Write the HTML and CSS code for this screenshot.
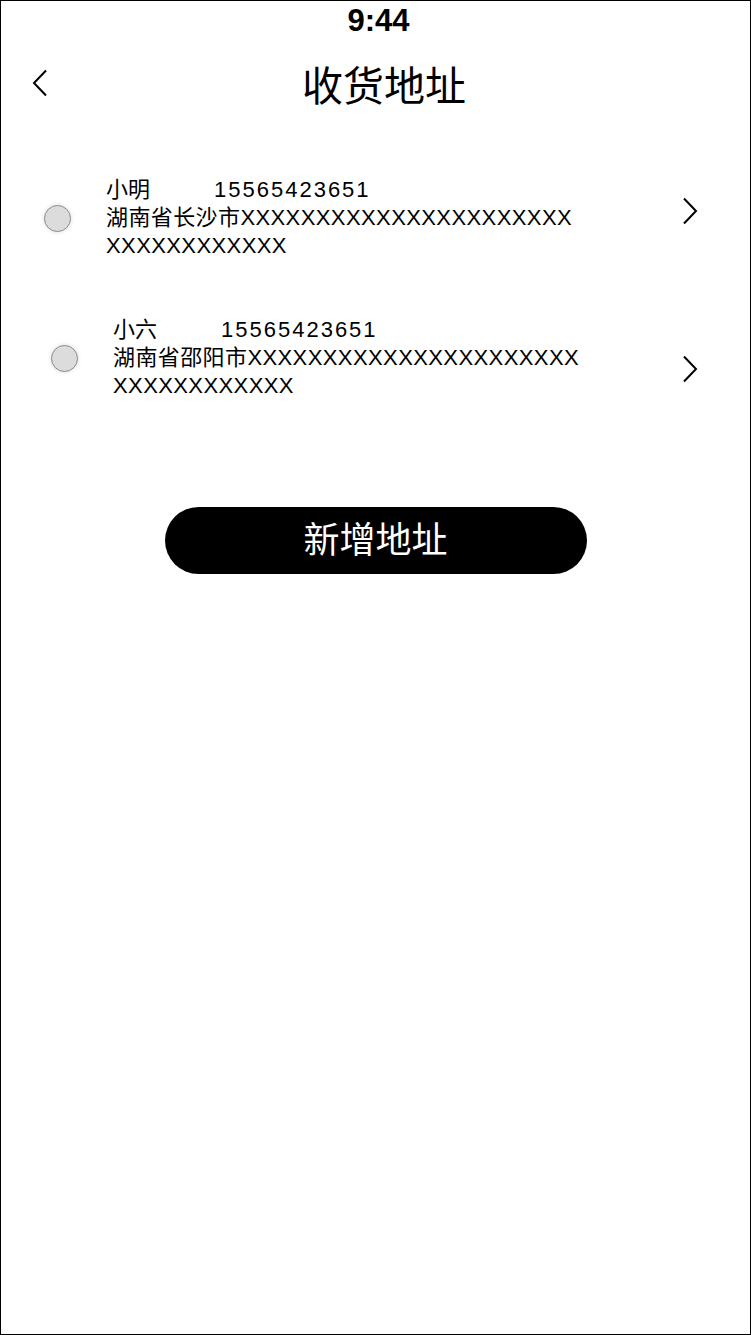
FILE: index.html
```html
<!DOCTYPE html>
<html lang="zh-CN">
<head>
    <meta charset="UTF-8">
    <meta name="viewport" content="width=device-width, initial-scale=1.0">
    <title>收货地址</title>
    <link rel="stylesheet" href="styles.css">
</head>
<body>
    <div class="page">
        <div class="status-bar">9:44</div>

        <header class="nav">
            <a class="nav-back" href="#">
                <svg width="16" height="28" viewBox="0 0 16 28"><polyline points="14,1.5 2,14 14,26.5" /></svg>
            </a>
            <h1 class="nav-title">收货地址</h1>
            <span class="nav-side"></span>
        </header>

        <ul class="addr-list">
            <li class="addr-item">
                <span class="radio"></span>
                <div class="addr-info">
                    <div class="addr-contact">
                        <span class="addr-name">小明</span>
                        <span class="addr-phone">15565423651</span>
                    </div>
                    <div class="addr-text">湖南省长沙市XXXXXXXXXXXXXXXXXXXXXX<br>XXXXXXXXXXXX</div>
                </div>
                <svg class="addr-arrow arrow-up" width="16" height="28" viewBox="0 0 16 28"><polyline points="2,1.5 14,14 2,26.5" /></svg>
            </li>
            <li class="addr-item addr-item-indent">
                <span class="radio"></span>
                <div class="addr-info">
                    <div class="addr-contact">
                        <span class="addr-name">小六</span>
                        <span class="addr-phone">15565423651</span>
                    </div>
                    <div class="addr-text">湖南省邵阳市XXXXXXXXXXXXXXXXXXXXXX<br>XXXXXXXXXXXX</div>
                </div>
                <svg class="addr-arrow arrow-down" width="16" height="28" viewBox="0 0 16 28"><polyline points="2,1.5 14,14 2,26.5" /></svg>
            </li>
        </ul>

        <button class="add-btn" type="button">新增地址</button>
    </div>
</body>
</html>
```

FILE: styles.css
```css
* { box-sizing: border-box; }
body { margin: 0; font-family: "Liberation Sans", "Noto Sans CJK SC", sans-serif; color: #000; background: #fff; }
.page { width: 751px; height: 1335px; border: 1px solid #000; background: #fff; }

.status-bar { height: 39px; line-height: 40px; text-align: center; padding-left: 6px; font-size: 31px; font-weight: bold; }

.nav { height: 86px; display: flex; align-items: center; }
.nav-back { width: 80px; padding-left: 31px; display: flex; }
.nav-side { width: 80px; }
.nav-title { flex: 1; margin: 9px 0 0; padding-left: 17px; text-align: center; font-size: 41px; font-weight: normal; line-height: 41px; }
.nav svg polyline, .addr-arrow polyline { fill: none; stroke: #000; stroke-width: 2; }

.addr-list { list-style: none; margin: 0; padding: 50px 0 0; display: flex; flex-direction: column; gap: 56px; }
.addr-item { display: flex; align-items: center; padding: 0 52px 0 43px; }
.addr-item-indent { padding-left: 50px; }
.radio { width: 27px; height: 27px; flex: none; border-radius: 50%; background: #dcdcdc; border: 1px solid #8c8c8c; box-shadow: 0 0 4px rgba(0,0,0,0.15); }
.addr-info { margin-left: 35px; font-size: 22px; line-height: 28px; white-space: nowrap; }
.addr-contact { display: flex; }
.addr-name { width: 108px; }
.addr-phone { letter-spacing: 2px; }
.addr-text { letter-spacing: 0.4px; }
.addr-arrow { margin-left: auto; flex: none; }
.arrow-up { margin-bottom: 15px; }
.arrow-down { margin-top: 22px; }

.add-btn { display: block; width: 422px; height: 67px; margin: 107px auto 0; padding: 0; border: none; border-radius: 34px; background: #000; color: #fff; font-family: inherit; font-size: 36px; line-height: 67px; }
```
